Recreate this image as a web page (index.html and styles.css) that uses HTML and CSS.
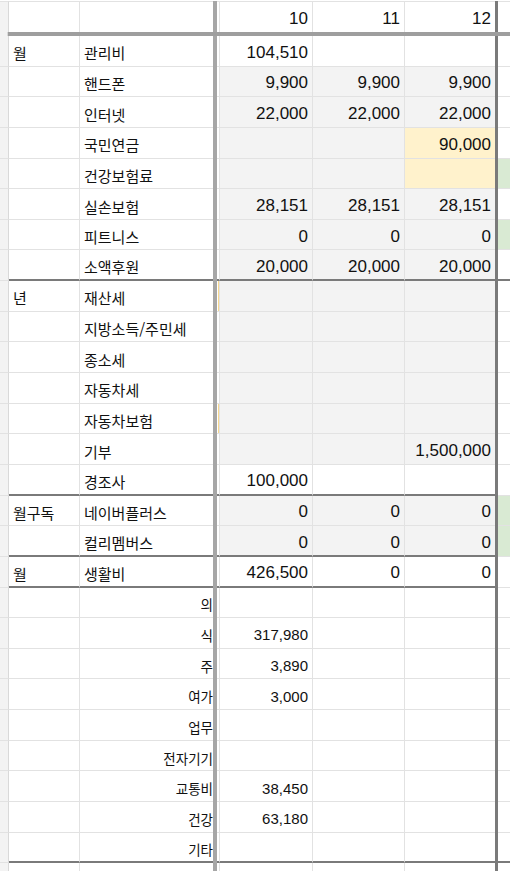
FILE: index.html
```html
<!DOCTYPE html>
<html lang="ko">
<head>
<meta charset="utf-8">
<title>가계부</title>
<link rel="stylesheet" href="styles.css">
</head>
<body>
<div class="sheet">
  <div class="row head">
    <div class="c c0"></div><div class="c c1"></div><div class="c c2"></div><div class="vbar"></div><div class="c sp"></div>
    <div class="c n c3">10</div><div class="c n c4">11</div><div class="c n c5">12</div><div class="dark"></div><div class="c c6"></div>
  </div>
  <div class="hbar"><div class="hb0"></div><div class="hb1"></div></div>

  <div class="row">
    <div class="c c0"></div><div class="c c1 k">월</div><div class="c c2 k">관리비</div><div class="vbar"></div><div class="c sp"></div>
    <div class="c n c3">104,510</div><div class="c n c4"></div><div class="c n c5"></div><div class="dark"></div><div class="c c6"></div>
  </div>
  <div class="row g">
    <div class="c c0"></div><div class="c c1 k"></div><div class="c c2 k">핸드폰</div><div class="vbar"></div><div class="c sp"></div>
    <div class="c n c3">9,900</div><div class="c n c4">9,900</div><div class="c n c5">9,900</div><div class="dark"></div><div class="c c6"></div>
  </div>
  <div class="row g">
    <div class="c c0"></div><div class="c c1 k"></div><div class="c c2 k">인터넷</div><div class="vbar"></div><div class="c sp"></div>
    <div class="c n c3">22,000</div><div class="c n c4">22,000</div><div class="c n c5">22,000</div><div class="dark"></div><div class="c c6"></div>
  </div>
  <div class="row g">
    <div class="c c0"></div><div class="c c1 k"></div><div class="c c2 k">국민연금</div><div class="vbar"></div><div class="c sp"></div>
    <div class="c n c3"></div><div class="c n c4"></div><div class="c n c5 y">90,000</div><div class="dark"></div><div class="c c6"></div>
  </div>
  <div class="row g">
    <div class="c c0"></div><div class="c c1 k"></div><div class="c c2 k">건강보험료</div><div class="vbar"></div><div class="c sp"></div>
    <div class="c n c3"></div><div class="c n c4"></div><div class="c n c5 y"></div><div class="dark"></div><div class="c c6 gr"></div>
  </div>
  <div class="row g">
    <div class="c c0"></div><div class="c c1 k"></div><div class="c c2 k">실손보험</div><div class="vbar"></div><div class="c sp"></div>
    <div class="c n c3">28,151</div><div class="c n c4">28,151</div><div class="c n c5">28,151</div><div class="dark"></div><div class="c c6"></div>
  </div>
  <div class="row g">
    <div class="c c0"></div><div class="c c1 k"></div><div class="c c2 k">피트니스</div><div class="vbar"></div><div class="c sp"></div>
    <div class="c n c3">0</div><div class="c n c4">0</div><div class="c n c5">0</div><div class="dark"></div><div class="c c6 gr"></div>
  </div>
  <div class="row g thick wide">
    <div class="c c0"></div><div class="c c1 k"></div><div class="c c2 k">소액후원</div><div class="vbar"></div><div class="c sp"></div>
    <div class="c n c3">20,000</div><div class="c n c4">20,000</div><div class="c n c5">20,000</div><div class="dark"></div><div class="c c6"></div>
  </div>

  <div class="row g">
    <div class="c c0"></div><div class="c c1 k">년</div><div class="c c2 k">재산세</div><div class="vbar"></div><div class="c sp ys"></div>
    <div class="c n c3"></div><div class="c n c4"></div><div class="c n c5"></div><div class="dark"></div><div class="c c6"></div>
  </div>
  <div class="row g">
    <div class="c c0"></div><div class="c c1 k"></div><div class="c c2 k">지방소득/주민세</div><div class="vbar"></div><div class="c sp"></div>
    <div class="c n c3"></div><div class="c n c4"></div><div class="c n c5"></div><div class="dark"></div><div class="c c6"></div>
  </div>
  <div class="row g">
    <div class="c c0"></div><div class="c c1 k"></div><div class="c c2 k">종소세</div><div class="vbar"></div><div class="c sp"></div>
    <div class="c n c3"></div><div class="c n c4"></div><div class="c n c5"></div><div class="dark"></div><div class="c c6"></div>
  </div>
  <div class="row g">
    <div class="c c0"></div><div class="c c1 k"></div><div class="c c2 k">자동차세</div><div class="vbar"></div><div class="c sp"></div>
    <div class="c n c3"></div><div class="c n c4"></div><div class="c n c5"></div><div class="dark"></div><div class="c c6"></div>
  </div>
  <div class="row g">
    <div class="c c0"></div><div class="c c1 k"></div><div class="c c2 k">자동차보험</div><div class="vbar"></div><div class="c sp ys"></div>
    <div class="c n c3"></div><div class="c n c4"></div><div class="c n c5"></div><div class="dark"></div><div class="c c6"></div>
  </div>
  <div class="row g">
    <div class="c c0"></div><div class="c c1 k"></div><div class="c c2 k">기부</div><div class="vbar"></div><div class="c sp"></div>
    <div class="c n c3"></div><div class="c n c4"></div><div class="c n c5">1,500,000</div><div class="dark"></div><div class="c c6"></div>
  </div>
  <div class="row thick">
    <div class="c c0"></div><div class="c c1 k"></div><div class="c c2 k">경조사</div><div class="vbar"></div><div class="c sp"></div>
    <div class="c n c3">100,000</div><div class="c n c4"></div><div class="c n c5"></div><div class="dark"></div><div class="c c6"></div>
  </div>

  <div class="row g">
    <div class="c c0"></div><div class="c c1 k">월구독</div><div class="c c2 k">네이버플러스</div><div class="vbar"></div><div class="c sp"></div>
    <div class="c n c3">0</div><div class="c n c4">0</div><div class="c n c5">0</div><div class="dark"></div><div class="c c6 gr"></div>
  </div>
  <div class="row g thick">
    <div class="c c0"></div><div class="c c1 k"></div><div class="c c2 k">컬리멤버스</div><div class="vbar"></div><div class="c sp"></div>
    <div class="c n c3">0</div><div class="c n c4">0</div><div class="c n c5">0</div><div class="dark"></div><div class="c c6 gr"></div>
  </div>

  <div class="row thick">
    <div class="c c0"></div><div class="c c1 k">월</div><div class="c c2 k">생활비</div><div class="vbar"></div><div class="c sp"></div>
    <div class="c n c3">426,500</div><div class="c n c4">0</div><div class="c n c5">0</div><div class="dark"></div><div class="c c6"></div>
  </div>

  <div class="row sub">
    <div class="c c0"></div><div class="c c1 k"></div><div class="c c2 k">의</div><div class="vbar"></div><div class="c sp"></div>
    <div class="c n c3"></div><div class="c n c4"></div><div class="c n c5"></div><div class="dark"></div><div class="c c6"></div>
  </div>
  <div class="row sub">
    <div class="c c0"></div><div class="c c1 k"></div><div class="c c2 k">식</div><div class="vbar"></div><div class="c sp"></div>
    <div class="c n c3">317,980</div><div class="c n c4"></div><div class="c n c5"></div><div class="dark"></div><div class="c c6"></div>
  </div>
  <div class="row sub">
    <div class="c c0"></div><div class="c c1 k"></div><div class="c c2 k">주</div><div class="vbar"></div><div class="c sp"></div>
    <div class="c n c3">3,890</div><div class="c n c4"></div><div class="c n c5"></div><div class="dark"></div><div class="c c6"></div>
  </div>
  <div class="row sub">
    <div class="c c0"></div><div class="c c1 k"></div><div class="c c2 k">여가</div><div class="vbar"></div><div class="c sp"></div>
    <div class="c n c3">3,000</div><div class="c n c4"></div><div class="c n c5"></div><div class="dark"></div><div class="c c6"></div>
  </div>
  <div class="row sub">
    <div class="c c0"></div><div class="c c1 k"></div><div class="c c2 k">업무</div><div class="vbar"></div><div class="c sp"></div>
    <div class="c n c3"></div><div class="c n c4"></div><div class="c n c5"></div><div class="dark"></div><div class="c c6"></div>
  </div>
  <div class="row sub">
    <div class="c c0"></div><div class="c c1 k"></div><div class="c c2 k">전자기기</div><div class="vbar"></div><div class="c sp"></div>
    <div class="c n c3"></div><div class="c n c4"></div><div class="c n c5"></div><div class="dark"></div><div class="c c6"></div>
  </div>
  <div class="row sub">
    <div class="c c0"></div><div class="c c1 k"></div><div class="c c2 k">교통비</div><div class="vbar"></div><div class="c sp"></div>
    <div class="c n c3">38,450</div><div class="c n c4"></div><div class="c n c5"></div><div class="dark"></div><div class="c c6"></div>
  </div>
  <div class="row sub">
    <div class="c c0"></div><div class="c c1 k"></div><div class="c c2 k">건강</div><div class="vbar"></div><div class="c sp"></div>
    <div class="c n c3">63,180</div><div class="c n c4"></div><div class="c n c5"></div><div class="dark"></div><div class="c c6"></div>
  </div>
  <div class="row sub thick wide">
    <div class="c c0"></div><div class="c c1 k"></div><div class="c c2 k">기타</div><div class="vbar"></div><div class="c sp"></div>
    <div class="c n c3"></div><div class="c n c4"></div><div class="c n c5"></div><div class="dark"></div><div class="c c6"></div>
  </div>
  <div class="row sub">
    <div class="c c0"></div><div class="c c1 k"></div><div class="c c2 k">의료비</div><div class="vbar"></div><div class="c sp"></div>
    <div class="c n c3"></div><div class="c n c4"></div><div class="c n c5"></div><div class="dark"></div><div class="c c6"></div>
  </div>
</div>
</body>
</html>
```

FILE: styles.css
```css
html, body {
  margin: 0;
  padding: 0;
  background: #ffffff;
}
body {
  width: 510px;
  height: 871px;
  overflow: hidden;
  font-family: "Liberation Sans", Arial, "Noto Sans CJK KR", sans-serif;
  color: #111111;
}
.sheet {
  padding-top: 1px;
}
.row {
  display: grid;
  grid-template-columns: 9px 71px 133px 4px 3px 93px 92px 90px 3px 12px;
  height: 30.65px;
}
.row.head {
  height: 31px;
}
.c {
  box-sizing: border-box;
  display: flex;
  align-items: center;
  padding-top: 4px;
  border-bottom: 1px solid #e2e2e2;
  border-right: 1px solid #e2e2e2;
  background: #ffffff;
  white-space: nowrap;
  overflow: hidden;
  min-width: 0;
}
.head .c {
  border-bottom: none;
  border-top: 1px solid #e2e2e2;
  padding-top: 3px;
}
.c0 {
  background: #f3f3f3;
  border-right-color: #d9d9d9;
}
.c2, .c5, .c6 {
  border-right: none;
}
.k {
  font-family: "Noto Sans CJK KR", "Noto Sans", sans-serif;
  font-size: 15px;
  padding-left: 4px;
}
.n {
  justify-content: flex-end;
  font-size: 17px;
  padding-right: 4px;
}
.vbar {
  background: #a6a6a6;
}
.dark {
  background: #7a7a7a;
}
.hbar {
  display: grid;
  grid-template-columns: 8px 1fr;
  height: 4px;
}
.hb0 {
  background: #f3f3f3;
  border-right: 1px solid #d9d9d9;
}
.hb1 {
  background: #9e9e9e;
}
.g .c3, .g .c4, .g .c5 {
  background: #f3f3f3;
}
.g .c5.y, .c5.y {
  background: #fff2cc;
}
.gr {
  background: #d9ead3;
}
.sp.ys {
  background: linear-gradient(to right, #ffffff 0, #ffffff 1px, #f7d88f 1px, #f7d88f 2px, #ffffff 2px);
}
.thick .c1, .thick .c2, .thick .sp, .thick .c3, .thick .c4, .thick .c5 {
  border-bottom: 2px solid #7a7a7a;
}
.thick.wide .c6 {
  border-bottom: 2px solid #7a7a7a;
}
.sub .c2 {
  justify-content: flex-end;
  padding-left: 0;
  padding-right: 0;
  font-size: 13.5px;
}
.sub .n {
  font-size: 15px;
}
```
